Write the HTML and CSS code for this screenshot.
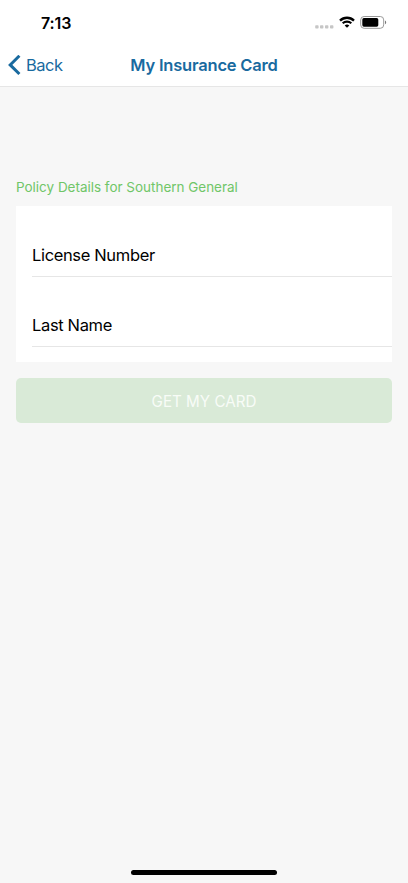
FILE: index.html
```html
<!DOCTYPE html>
<html lang="en">
<head>
    <meta charset="UTF-8">
    <meta name="viewport" content="width=device-width, initial-scale=1">
    <title>My Insurance Card</title>
    <link rel="stylesheet" href="styles.css">
</head>
<body>

<div class="screen">
    <header class="header">
        <div class="status">
            <span class="time">7:13</span>
            <div class="status-icons">
                <svg class="signal" width="19" height="4" viewBox="0 0 19 4" fill="#c6c6c6">
                    <rect x="0.2" y="0.3" width="3.4" height="3.2" rx="0.8"/>
                    <rect x="5" y="0.3" width="3.4" height="3.2" rx="0.8"/>
                    <rect x="10" y="0.3" width="3.4" height="3.2" rx="0.8"/>
                    <rect x="15" y="0.3" width="3.4" height="3.2" rx="0.8"/>
                </svg>
                <svg class="wifi" width="16" height="12" viewBox="0 0 16 12" fill="none" stroke="#000">
                    <path d="M1 4.6C4.9 .8 11.1 .8 15 4.6" stroke-width="2.3"/>
                    <path d="M3.7 7.3C6.1 5 9.9 5 12.3 7.3" stroke-width="2.1"/>
                    <path d="M8 11.7L5.7 9.4C7 8.2 9 8.2 10.3 9.4Z" fill="#000" stroke="none"/>
                </svg>
                <svg class="battery" width="27" height="13" viewBox="0 0 27 13">
                    <rect x="0.7" y="0.5" width="23" height="11.8" rx="3.4" fill="none" stroke="#999"/>
                    <rect x="2.3" y="2.1" width="16" height="8.6" rx="1.6" fill="#000"/>
                    <path d="M25 4.4C26.6 5 26.6 7.6 25 8.2Z" fill="#777"/>
                </svg>
            </div>
        </div>
        <nav class="navbar">
            <a class="back" href="javascript:;">
                <svg width="13" height="21" viewBox="0 0 13 21" fill="none" stroke="#196a9f" stroke-width="3">
                    <path d="M11.4 0.8L2.2 9.9L11.4 19"/>
                </svg>
                <span>Back</span>
            </a>
            <h1 class="title">My Insurance Card</h1>
        </nav>
    </header>

    <main class="content">
        <h2 class="section-title">Policy Details for Southern General</h2>
        <form class="policy">
            <div class="fields">
                <div class="field">License Number</div>
                <div class="field">Last Name</div>
            </div>
            <button class="submit" type="button" disabled>GET MY CARD</button>
        </form>
    </main>

    <div class="home-bar"></div>
</div>

</body>
</html>
```

FILE: styles.css
```css
*{
    margin: 0;
    padding: 0;
    box-sizing: border-box;
}

body{
    font-family: Inter, "Liberation Sans", sans-serif;
    background-color: #f7f7f7;
}

.screen{
    display: flex;
    flex-direction: column;
    height: 883px;
}

.header{
    height: 87px;
    background-color: #fff;
    border-bottom: 1px solid #e6e6e6;
}

.status{
    display: flex;
    justify-content: space-between;
    height: 44px;
    padding: 0 21px 0 41px;
}

.time{
    font-size: 16px;
    font-weight: 600;
    line-height: 20px;
    letter-spacing: -0.1px;
    padding-top: 13px;
}

.status-icons{
    display: flex;
    align-items: flex-start;
}

.signal{
    margin: 25px 5px 0 0;
}

.wifi{
    margin: 16px 5px 0 0;
}

.battery{
    margin-top: 16px;
}

.navbar{
    display: grid;
    grid-template-columns: 1fr auto 1fr;
    align-items: center;
    height: 42px;
    color: #196a9f;
}

.back{
    display: flex;
    align-items: center;
    gap: 5px;
    padding-left: 8px;
    font-size: 16.5px;
    letter-spacing: -0.5px;
    color: #196a9f;
    text-decoration: none;
}

.title{
    font-size: 16.5px;
    font-weight: 600;
    letter-spacing: -0.2px;
}

.content{
    flex: 1;
    padding: 90px 16px 0;
}

.section-title{
    font-size: 13.5px;
    font-weight: 400;
    line-height: 20px;
    letter-spacing: -0.02px;
    color: #70c668;
}

.fields{
    height: 156px;
    margin-top: 9px;
    padding: 1px 0 0 16px;
    background-color: #fff;
}

.field{
    height: 70px;
    padding-top: 38px;
    font-size: 16.5px;
    line-height: 20px;
    letter-spacing: -0.35px;
    border-bottom: 1px solid #e6e6e6;
}

.submit{
    display: block;
    width: 100%;
    height: 45px;
    margin-top: 16px;
    padding-top: 2px;
    border: none;
    border-radius: 5px;
    background-color: #d9ead7;
    color: #f8fcf7;
    font-family: inherit;
    font-size: 15.2px;
}

.home-bar{
    width: 146px;
    height: 5px;
    margin: 0 auto 8px;
    border-radius: 3px;
    background-color: #000;
}
```
